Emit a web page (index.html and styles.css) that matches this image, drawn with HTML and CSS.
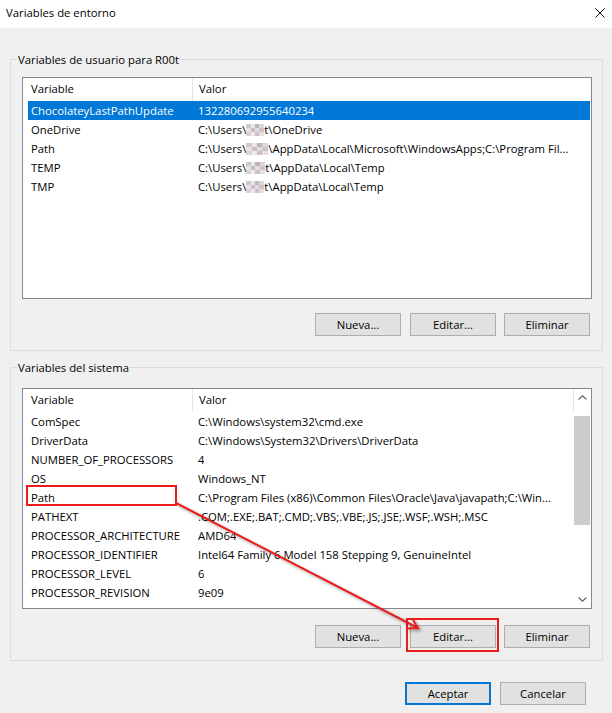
FILE: index.html
```html
<!DOCTYPE html>
<html lang="es">
<head>
<meta charset="utf-8">
<title>Variables de entorno</title>
<link rel="stylesheet" href="styles.css">
</head>
<body>
<div class="window">
  <div class="titlebar">
    <span class="title">Variables de entorno</span>
    <svg class="close" width="10" height="10" viewBox="0 0 10 10"><path d="M0.5 0.5L9.5 9.5M9.5 0.5L0.5 9.5" stroke="#111" stroke-width="1" fill="none"/></svg>
  </div>

  <div class="group group-user">
    <div class="group-label">Variables de usuario para R00t</div>
    <div class="list list-user">
      <div class="list-main">
        <div class="list-header">
          <div class="hcell hcell-var">Variable</div>
          <div class="hcell hcell-val">Valor</div>
        </div>
        <div class="row selected"><span class="c1">ChocolateyLastPathUpdate</span><span class="c2">132280692955640234</span></div>
        <div class="row"><span class="c1">OneDrive</span><span class="c2">C:\Users\<span class="mosaic"></span>t\OneDrive</span></div>
        <div class="row"><span class="c1">Path</span><span class="c2">C:\Users\<span class="mosaic m2"></span>\AppData\Local\Microsoft\WindowsApps;C:\Program Fil...</span></div>
        <div class="row"><span class="c1">TEMP</span><span class="c2">C:\Users\<span class="mosaic m3"></span>t\AppData\Local\Temp</span></div>
        <div class="row"><span class="c1">TMP</span><span class="c2">C:\Users\<span class="mosaic"></span>t\AppData\Local\Temp</span></div>
      </div>
    </div>
    <div class="buttons">
      <button class="btn btn-first">Nueva...</button>
      <button class="btn">Editar...</button>
      <button class="btn">Eliminar</button>
    </div>
  </div>

  <div class="group group-sys">
    <div class="group-label">Variables del sistema</div>
    <div class="list list-sys">
      <div class="list-main">
        <div class="list-header">
          <div class="hcell hcell-var">Variable</div>
          <div class="hcell hcell-val hcell-end">Valor</div>
        </div>
        <div class="row"><span class="c1">ComSpec</span><span class="c2">C:\Windows\system32\cmd.exe</span></div>
        <div class="row"><span class="c1">DriverData</span><span class="c2">C:\Windows\System32\Drivers\DriverData</span></div>
        <div class="row"><span class="c1">NUMBER_OF_PROCESSORS</span><span class="c2">4</span></div>
        <div class="row"><span class="c1">OS</span><span class="c2">Windows_NT</span></div>
        <div class="row"><span class="c1">Path</span><span class="c2">C:\Program Files (x86)\Common Files\Oracle\Java\javapath;C:\Win...</span></div>
        <div class="row"><span class="c1">PATHEXT</span><span class="c2">.COM;.EXE;.BAT;.CMD;.VBS;.VBE;.JS;.JSE;.WSF;.WSH;.MSC</span></div>
        <div class="row"><span class="c1">PROCESSOR_ARCHITECTURE</span><span class="c2">AMD64</span></div>
        <div class="row"><span class="c1">PROCESSOR_IDENTIFIER</span><span class="c2">Intel64 Family 6 Model 158 Stepping 9, GenuineIntel</span></div>
        <div class="row"><span class="c1">PROCESSOR_LEVEL</span><span class="c2">6</span></div>
        <div class="row"><span class="c1">PROCESSOR_REVISION</span><span class="c2">9e09</span></div>
        <div class="row"><span class="c1">PSModulePath</span><span class="c2">%ProgramFiles%\WindowsPowerShell\Modules;C:\Windows\system32\Wi...</span></div>
      </div>
      <div class="scrollbar">
        <div class="sb-arrow"><svg width="9" height="5" viewBox="0 0 9 5"><path d="M0.5 4.5L4.5 0.8L8.5 4.5" stroke="#606060" stroke-width="1.1" fill="none"/></svg></div>
        <div class="sb-track"><div class="sb-thumb"></div></div>
        <div class="sb-arrow"><svg width="9" height="5" viewBox="0 0 9 5"><path d="M0.5 0.5L4.5 4.2L8.5 0.5" stroke="#606060" stroke-width="1.1" fill="none"/></svg></div>
      </div>
    </div>
    <div class="buttons buttons-sys">
      <button class="btn btn-first">Nueva...</button>
      <button class="btn">Editar...</button>
      <button class="btn">Eliminar</button>
    </div>
  </div>

  <div class="footer">
    <button class="btn btn-default">Aceptar</button>
    <button class="btn">Cancelar</button>
  </div>

  <svg class="annot" width="612" height="713" viewBox="0 0 612 713">
    <rect x="27" y="486" width="149" height="19" fill="none" stroke="#ec1c1c" stroke-width="2"/>
    <rect x="407" y="619" width="91" height="32" fill="none" stroke="#ec1c1c" stroke-width="2"/>
    <g class="arrow">
      <path d="M176 503L418 628" stroke="#ec1c1c" stroke-width="2" fill="none"/>
      <path d="M407 628.5L418 628L412.6 619.2" stroke="#ec1c1c" stroke-width="2" fill="none" stroke-linejoin="miter"/>
    </g>
  </svg>
</div>
</body>
</html>
```

FILE: styles.css
```css
* { box-sizing: border-box; }

html, body {
  margin: 0;
  padding: 0;
}

body {
  background: #f0f0f0;
  font-family: "Open Sans", "Noto Sans", sans-serif;
  font-size: 11.3px;
  color: #000;
}

.window {
  position: relative;
  width: 612px;
  height: 713px;
  background: #f0f0f0;
  overflow: hidden;
}

.titlebar {
  height: 28px;
  background: #fff;
  display: flex;
  align-items: center;
  justify-content: space-between;
  padding: 0 7px 2px 6px;
}

.title {
  line-height: 16px;
}

.close {
  display: block;
}

.group {
  margin: 0 9px 0 10px;
  border: 1px solid #dcdcdc;
  padding: 0 10px 14px 11px;
}

.group-user {
  margin-top: 31px;
}

.group-sys {
  margin-top: 16px;
  padding-bottom: 12px;
}

.group-label {
  width: max-content;
  margin: -9px 0 0 -5px;
  padding: 0 1px;
  height: 17px;
  line-height: 17px;
  background: #f0f0f0;
}

.list {
  display: flex;
  background: #fff;
  border: 1px solid #828790;
  overflow: hidden;
}

.list-user {
  margin-top: 9px;
  height: 222px;
}

.list-sys {
  margin-top: 12px;
  height: 221px;
}

.list-main {
  flex: 1;
  min-width: 0;
  overflow: hidden;
}

.list-header {
  display: flex;
  height: 23px;
  line-height: 22px;
}

.hcell {
  white-space: nowrap;
}

.hcell-var {
  width: 170px;
  padding-left: 8px;
  border-right: 1px solid #e5e5e5;
}

.hcell-val {
  flex: 1;
  padding-left: 6px;
}

.hcell-end {
  border-right: 1px solid #e5e5e5;
}

.row {
  display: flex;
  height: 19px;
  line-height: 19px;
  margin: 0 1px 0 5px;
  white-space: nowrap;
}

.row.selected {
  background: #0078d7;
  color: #fff;
}

.c1 {
  width: 165px;
  flex: none;
  padding-left: 3px;
  overflow: hidden;
}

.c2 {
  padding-left: 5px;
  overflow: hidden;
}

.mosaic {
  display: inline-block;
  width: 18px;
  height: 12px;
  vertical-align: -2px;
  background:
    linear-gradient(90deg, #cfc8cc 0 25%, #ebe6e8 25% 50%, #bdb4b9 50% 75%, #ddd6da 75%) top / 100% 34% no-repeat,
    linear-gradient(90deg, #e8e2e5 0 25%, #c6bec2 25% 50%, #e3dde0 50% 75%, #cbc3c7 75%) center / 100% 34% no-repeat,
    linear-gradient(90deg, #d9d2d6 0 25%, #efeaec 25% 50%, #c9c1c5 50% 75%, #e6e0e3 75%) bottom / 100% 34% no-repeat;
}

.m2 { width: 22px; }
.m3 { width: 19px; }

.scrollbar {
  width: 17px;
  flex: none;
  display: flex;
  flex-direction: column;
  background: #fff;
}

.sb-arrow {
  height: 17px;
  display: flex;
  align-items: center;
  justify-content: center;
}

.sb-arrow svg {
  display: block;
}

.sb-track {
  flex: 1;
}

.sb-thumb {
  margin: 10px 1px 0 0;
  height: 109px;
  background: #cdcdcd;
}

.buttons {
  display: flex;
  justify-content: flex-end;
  gap: 8px;
  margin-top: 14px;
  padding-right: 2px;
}

.buttons-sys {
  margin-top: 16px;
}

.btn {
  width: 86px;
  height: 23px;
  padding: 0;
  margin: 0;
  background: #e1e1e1;
  border: 1px solid #adadad;
  font-family: inherit;
  font-size: inherit;
  color: #000;
  line-height: 20px;
}

.btn-first {
  margin-right: 1px;
}

.btn-default {
  border: 2px solid #0078d7;
}

.footer {
  display: flex;
  justify-content: flex-end;
  gap: 9px;
  margin-top: 21px;
  padding-right: 26px;
}

.annot {
  position: absolute;
  left: 0;
  top: 0;
  pointer-events: none;
}

.arrow {
  filter: drop-shadow(2px 2px 1.5px rgba(0, 0, 0, 0.35));
}
```
